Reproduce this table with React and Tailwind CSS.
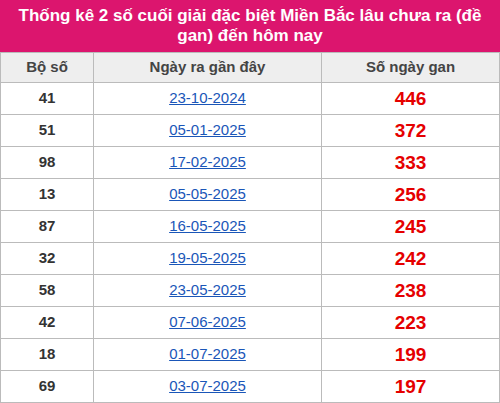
const rows = [
  ['41', '23-10-2024', '446'],
  ['51', '05-01-2025', '372'],
  ['98', '17-02-2025', '333'],
  ['13', '05-05-2025', '256'],
  ['87', '16-05-2025', '245'],
  ['32', '19-05-2025', '242'],
  ['58', '23-05-2025', '238'],
  ['42', '07-06-2025', '223'],
  ['18', '01-07-2025', '199'],
  ['69', '03-07-2025', '197'],
];

export default function App() {
  return (
    <div className="w-[500px] bg-white font-['Liberation_Sans',Arial,sans-serif]">
      {/* title band */}
      <div className="bg-[#dc156e] h-[52px] flex items-center justify-center px-4 text-center text-white font-bold text-[17px] leading-[20px]">
        Thống kê 2 số cuối giải đặc biệt Miền Bắc lâu chưa ra (đề gan) đến hôm nay
      </div>

      <table className="w-full border-collapse table-fixed">
        <thead>
          <tr className="bg-[#eeeeee] h-[30px]">
            <th className="w-[93px] border border-[#bbbbbb] text-[15px] font-bold text-[#444] p-0">Bộ số</th>
            <th className="w-[228px] border border-[#bbbbbb] text-[15px] font-bold text-[#444] p-0">Ngày ra gần đây</th>
            <th className="border border-[#bbbbbb] text-[15px] font-bold text-[#444] p-0">Số ngày gan</th>
          </tr>
        </thead>
        <tbody>
          {rows.map((r) => (
            <tr key={r[0]} className="h-[32px]">
              <td className="border border-[#bbbbbb] text-center text-[15px] font-bold text-[#333] p-0">{r[0]}</td>
              <td className="border border-[#bbbbbb] text-center text-[15px] p-0">
                <a href="#" className="text-[#1a56b8] underline">{r[1]}</a>
              </td>
              <td className="border border-[#bbbbbb] text-center text-[19px] font-bold text-[#e50000] leading-none p-0">{r[2]}</td>
            </tr>
          ))}
        </tbody>
      </table>
    </div>
  );
}
